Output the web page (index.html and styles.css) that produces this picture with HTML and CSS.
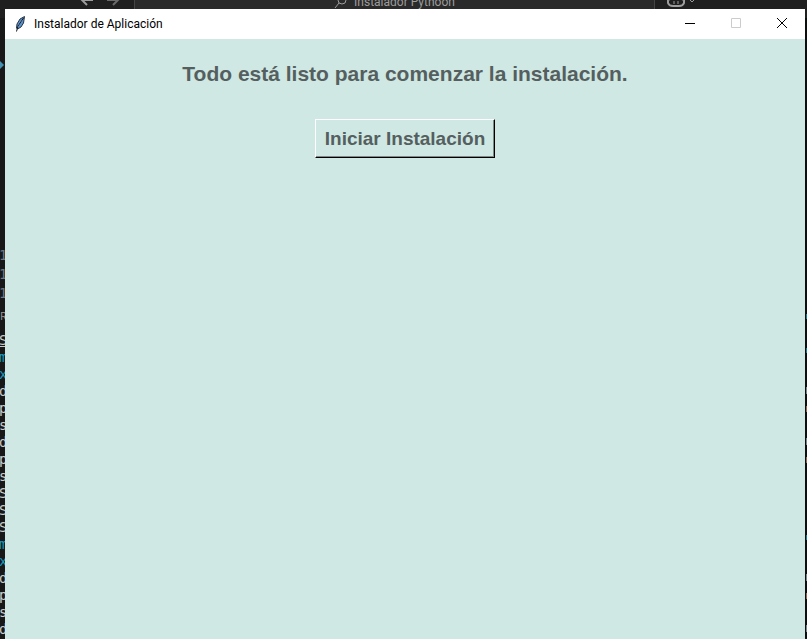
FILE: index.html
```html
<!DOCTYPE html>
<html lang="es">
<head>
<meta charset="utf-8">
<title>Instalador de Aplicación</title>
<link rel="stylesheet" href="styles.css">
</head>
<body>
<div class="editor" aria-hidden="true">
  <div class="editor-bar">
    <div class="nav">
      <svg width="14" height="14" viewBox="0 0 14 14"><path class="bold" d="M13 7H2M7 2L2 7l5 5"/></svg>
      <svg class="dim" width="14" height="14" viewBox="0 0 14 14"><path class="bold" d="M1 7h11M7 2l5 5-5 5"/></svg>
    </div>
    <div class="command">
      <svg width="14" height="14" viewBox="0 0 14 14"><circle cx="8" cy="5" r="4"/><path d="M5 8L1 13"/></svg>
      <span>Instalador Pythoon</span>
    </div>
    <div class="assistant">
      <svg width="18" height="16" viewBox="0 0 18 16"><path class="bold" d="M3 2h12v5l2 1v3q-1 3-5 3H6q-4 0-5-3V8l2-1z"/><path d="M3 7h12M7 9v3M11 9v3"/></svg>
      <svg width="8" height="8" viewBox="0 0 8 8"><path d="M1 3l3 3 3-3"/></svg>
    </div>
  </div>
  <div class="editor-main">
    <div class="side">
      <div class="file-mark"><svg width="5" height="12" viewBox="0 0 5 12"><path d="M0 2l4 4-4 4z"/></svg></div>
      <div class="numbers"><div>1</div><div>1</div><div>1</div></div>
      <div class="tab">R</div>
      <div class="terminal">
        <div class="link">S</div><div class="cyan">m</div><div class="cyan">x</div><div>d</div><div>p</div><div>s</div><div>d</div><div>p</div><div>s</div><div>S</div><div>S</div><div>S</div><div class="cyan">m</div><div class="cyan">x</div><div>d</div><div>p</div><div>s</div><div>d</div>
      </div>
    </div>
    <div class="edge">
      <i class="cyan-mark"></i><i></i><i class="cyan-mark"></i><i></i><i class="grey-mark"></i><i class="warm-mark"></i><i></i><i class="grey-mark"></i><i class="warm-mark"></i><i></i><i></i><i></i><i></i><i class="cyan-mark"></i><i></i><i class="grey-mark"></i><i class="warm-mark"></i><i></i><i class="grey-mark"></i>
    </div>
  </div>
</div>
<main class="window">
  <header class="titlebar">
    <svg class="feather" width="16" height="16" viewBox="0 0 16 16">
      <path class="vane" d="M11.500 .5L7 3 4 8l-.5 4 1 1L8 11l2.500-4z"/>
      <path class="shine" d="M10 3L6 8 5 11"/>
      <path class="quill" d="M10.500 2L5 10l-1.500 5.500"/>
    </svg>
    <span class="caption">Instalador de Aplicación</span>
    <div class="controls">
      <button type="button" aria-label="Minimizar"><svg width="10" height="10" viewBox="0 0 10 10"><path d="M0 5.500h10"/></svg></button>
      <button type="button" aria-label="Maximizar" disabled><svg width="10" height="10" viewBox="0 0 10 10"><path d="M.5 .5h9v9h-9z"/></svg></button>
      <button type="button" aria-label="Cerrar"><svg width="10" height="10" viewBox="0 0 10 10"><path d="M0 0l10 10M10 0L0 10"/></svg></button>
    </div>
  </header>
  <section class="content">
    <h1>Todo está listo para comenzar la instalación.</h1>
    <button type="button" class="start">Iniciar Instalación</button>
  </section>
</main>
</body>
</html>
```
FILE: styles.css
```css
* { box-sizing: border-box; }
html, body { height: 100%; }
body {
  margin: 0;
  position: relative;
  overflow: hidden;
  background: #181818;
  font-family: Roboto, "Open Sans", sans-serif;
}
svg { display: block; fill: none; stroke: currentColor; }

.editor { height: 100%; overflow: hidden; }
.editor-bar {
  display: grid;
  grid-template-columns: 134px 1fr 152px;
  height: 32px;
  margin-top: -14px;
  background: #1f1f1f;
  color: #9d9d9d;
  font-size: 12px;
  line-height: 32px;
}
.nav, .command, .assistant { display: flex; align-items: center; }
.nav { justify-content: flex-end; gap: 12px; padding: 0 14px 4px 0; }
.nav .dim { color: #6b6b6b; }
.command {
  justify-content: center;
  gap: 6px;
  background: #2a2a2a;
  border: 1px solid #454545;
  border-width: 0 1px;
}
.assistant { gap: 3px; padding: 0 0 4px 12px; }
.editor-bar .bold { stroke-width: 2; }
.editor-main { display: flex; justify-content: space-between; }
.side {
  width: 5px;
  overflow: hidden;
  color: #cccccc;
  font: 14px/17px "DejaVu Sans Mono", monospace;
}
.file-mark { height: 228px; padding-top: 41px; }
.file-mark path { fill: #4291b0; stroke: none; }
.numbers, .terminal { margin-left: -1px; }
.numbers { color: #6e7681; line-height: 19px; }
.tab { height: 29px; padding-top: 4px; font: 11px/17px "Open Sans", sans-serif; color: #a09a94; }
.terminal .cyan { color: #1699be; }
.terminal .link { text-decoration: underline; }
.edge { width: 2px; padding-top: 296px; background: #0c0e10; }
.edge i { display: block; height: 17px; }
.edge .cyan-mark { background: linear-gradient(#147991, #147991) 1px 0 / 1px 5px no-repeat; }
.edge .grey-mark { background: linear-gradient(#73828c, #73828c) 1px 5px / 1px 7px no-repeat; }
.edge .warm-mark { background: linear-gradient(#96604b, #96604b) 1px 7px / 1px 6px no-repeat; }

.window {
  position: absolute;
  inset: 9px 2px 0 5px;
  background: #cfe8e3;
}
.titlebar {
  display: flex;
  align-items: center;
  height: 30px;
  padding-left: 8px;
  background: #ffffff;
  color: #000000;
}
.feather .vane { fill: #5a91d0; stroke: #283442; }
.feather .shine { stroke: #b0d4f5; }
.feather .quill { stroke: #101820; }
.caption { flex: 1; margin-left: 5px; font-size: 12px; line-height: 16px; }
.controls { display: flex; height: 100%; }
.controls button {
  display: flex;
  align-items: center;
  justify-content: center;
  width: 46px;
  padding: 0 0 2px;
  border: 0;
  background: transparent;
  color: #000000;
}
.controls button:disabled { color: #cccccc; }
.content {
  display: flex;
  flex-direction: column;
  align-items: center;
  padding-top: 20px;
  font-family: "Liberation Sans", Arial, sans-serif;
  color: #555f60;
}
h1 { margin: 0 0 30px; font-size: 21px; line-height: 30px; font-weight: bold; }
.start {
  padding: 7px 9px;
  border: 1px solid;
  border-color: #ffffff #000000 #000000 #ffffff;
  box-shadow: inset -1px -1px 0 #7c8b88;
  background: #cfe8e3;
  color: inherit;
  font: bold 19px/23px "Liberation Sans", Arial, sans-serif;
}
```
